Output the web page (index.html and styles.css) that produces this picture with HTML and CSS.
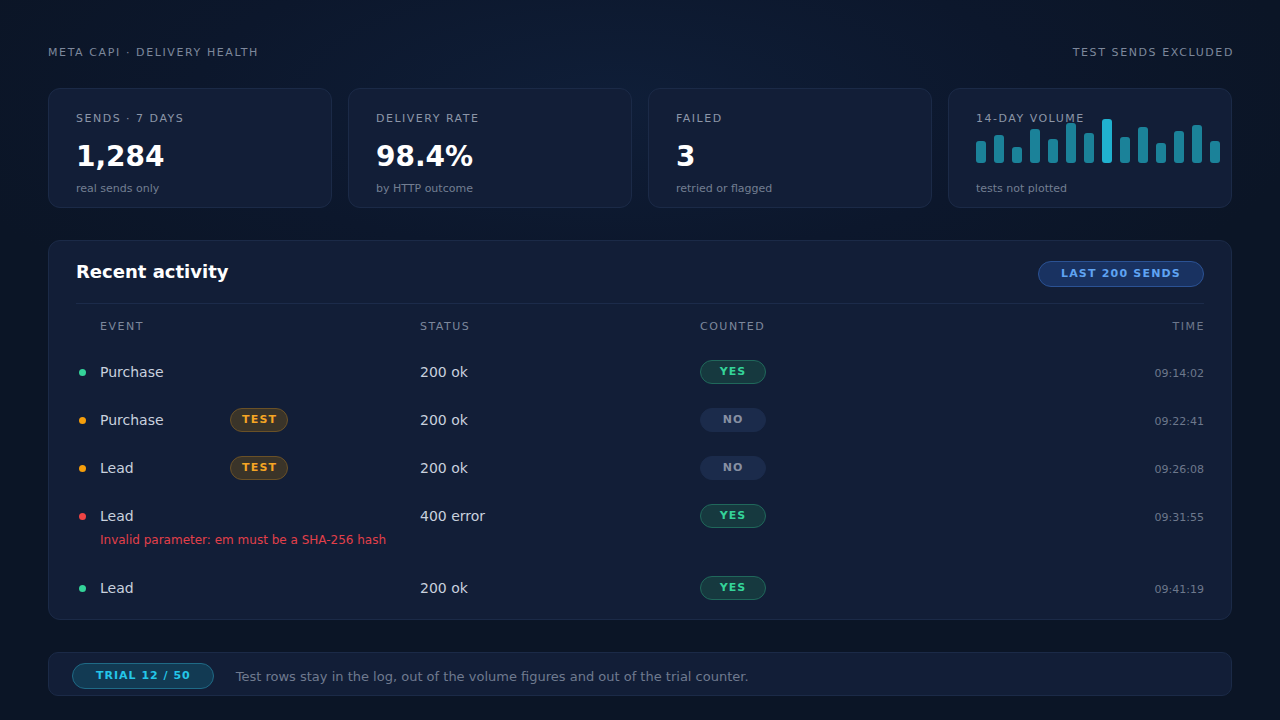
FILE: index.html
```html
<!DOCTYPE html>
<html lang="en">

<head>
    <meta charset="UTF-8" />
    <title>Delivery health</title>
    <link rel="stylesheet" href="styles.css">
</head>

<body>
    <div class="page">
        <div class="top">
            <span>META CAPI · DELIVERY HEALTH</span>
            <span>TEST SENDS EXCLUDED</span>
        </div>

        <!-- 统计卡片 -->
        <div class="stats">
            <div class="card">
                <div class="label">SENDS · 7 DAYS</div>
                <div class="value">1,284</div>
                <div class="sub">real sends only</div>
            </div>
            <div class="card">
                <div class="label">DELIVERY RATE</div>
                <div class="value">98.4%</div>
                <div class="sub">by HTTP outcome</div>
            </div>
            <div class="card">
                <div class="label">FAILED</div>
                <div class="value">3</div>
                <div class="sub">retried or flagged</div>
            </div>
            <div class="card">
                <div class="label">14-DAY VOLUME</div>
                <div class="chart">
                    <i style="height: 22px"></i>
                    <i style="height: 28px"></i>
                    <i style="height: 16px"></i>
                    <i style="height: 34px"></i>
                    <i style="height: 24px"></i>
                    <i style="height: 40px"></i>
                    <i style="height: 30px"></i>
                    <i class="peak" style="height: 44px"></i>
                    <i style="height: 26px"></i>
                    <i style="height: 36px"></i>
                    <i style="height: 20px"></i>
                    <i style="height: 32px"></i>
                    <i style="height: 38px"></i>
                    <i style="height: 22px"></i>
                </div>
                <div class="sub">tests not plotted</div>
            </div>
        </div>

        <!-- 最近记录 -->
        <div class="panel">
            <div class="panel-head">
                <h3>Recent activity</h3>
                <span class="pill blue">LAST 200 SENDS</span>
            </div>
            <div class="row head">
                <span></span>
                <span>EVENT</span>
                <span>STATUS</span>
                <span>COUNTED</span>
                <span class="time">TIME</span>
            </div>
            <div class="row">
                <span class="dot green"></span>
                <span class="event"><b>Purchase</b></span>
                <span>200 ok</span>
                <span><em class="count yes">YES</em></span>
                <span class="time">09:14:02</span>
            </div>
            <div class="row">
                <span class="dot orange"></span>
                <span class="event"><b>Purchase</b><em class="pill test">TEST</em></span>
                <span>200 ok</span>
                <span><em class="count no">NO</em></span>
                <span class="time">09:22:41</span>
            </div>
            <div class="row">
                <span class="dot orange"></span>
                <span class="event"><b>Lead</b><em class="pill test">TEST</em></span>
                <span>200 ok</span>
                <span><em class="count no">NO</em></span>
                <span class="time">09:26:08</span>
            </div>
            <div class="row">
                <span class="dot red"></span>
                <span class="event"><b>Lead</b></span>
                <span>400 error</span>
                <span><em class="count yes">YES</em></span>
                <span class="time">09:31:55</span>
                <p class="error">Invalid parameter: em must be a SHA-256 hash</p>
            </div>
            <div class="row">
                <span class="dot green"></span>
                <span class="event"><b>Lead</b></span>
                <span>200 ok</span>
                <span><em class="count yes">YES</em></span>
                <span class="time">09:41:19</span>
            </div>
        </div>

        <div class="foot">
            <span class="pill trial">TRIAL 12 / 50</span>
            <p>Test rows stay in the log, out of the volume figures and out of the trial counter.</p>
        </div>
    </div>
</body>

</html>
```

FILE: styles.css
```css
body {
    margin: 0;
    padding: 0;
    height: 720px;
    overflow: hidden;
    font-family: "DejaVu Sans", "Liberation Sans", sans-serif;
    color: #c9d1de;
    background: radial-gradient(ellipse 700px 260px at 48% 14%, #0f1e38 0%, #0c172c 60%, #0b1526 100%);
    background-color: #0b1526;
}

.page {
    padding: 46px 48px 0;
}

.top {
    display: flex;
    justify-content: space-between;
    font-size: 11px;
    line-height: 14px;
    letter-spacing: 1.6px;
    color: #7d889c;
    margin-bottom: 28px;
    margin-right: -2px;
}

.stats {
    display: grid;
    grid-template-columns: repeat(4, minmax(0, 1fr));
    gap: 16px;
    margin-bottom: 32px;
}

.card {
    height: 120px;
    box-sizing: border-box;
    padding: 23px 27px 0;
    background-color: #121e37;
    border: 1px solid #1b2a47;
    border-radius: 12px;
}

.label {
    font-size: 11px;
    line-height: 14px;
    letter-spacing: 1.5px;
    color: #8c96a8;
}

.value {
    margin-top: 14px;
    font-size: 28px;
    line-height: 34px;
    font-weight: bold;
    color: #fff;
}

.sub {
    margin-top: 8px;
    font-size: 11px;
    line-height: 14px;
    color: #737e92;
}

.chart {
    display: flex;
    align-items: flex-end;
    gap: 8px;
    height: 23px;
    margin-top: 14px;
    padding-bottom: 11px;
}

.chart i {
    flex: none;
    width: 10px;
    border-radius: 3px;
    background-color: #1b8299;
}

.chart i.peak {
    background-color: #20b1cf;
}

.panel {
    height: 380px;
    box-sizing: border-box;
    padding: 19px 27px 8px;
    background-color: #121e37;
    border: 1px solid #1b2a47;
    border-radius: 12px;
    margin-bottom: 32px;
}

.panel-head {
    display: flex;
    justify-content: space-between;
    align-items: center;
    padding: 1px 0 16px;
    border-bottom: 1px solid #1c2b4a;
}

.panel-head h3 {
    margin: 0 0 5px;
    font-size: 18px;
    color: #fff;
}

.pill {
    display: inline-block;
    font-style: normal;
    font-size: 11px;
    line-height: 14px;
    font-weight: bold;
    letter-spacing: 1.2px;
    border-radius: 20px;
}

.pill.blue {
    padding: 5px 22px;
    color: #5fa3f2;
    background-color: #193261;
    border: 1px solid #2b5294;
}

.pill.test {
    padding: 4px 10px 4px 11px;
    color: #f5a524;
    background-color: #3a3429;
    border: 1px solid #6a5127;
}

.pill.trial {
    padding: 5px 22px 5px 23px;
    letter-spacing: 1px;
    color: #24c6e8;
    background-color: #123a53;
    border: 1px solid #1f6a86;
}

.row {
    display: grid;
    grid-template-columns: 24px 320px 280px 1fr auto;
    align-items: center;
    padding: 12px 0;
    font-size: 14px;
    line-height: 24px;
    color: #c9d1de;
}

.row.head {
    padding: 2px 0 0;
    height: 42px;
    font-size: 11px;
    letter-spacing: 1.5px;
    color: #7d889c;
}

.row.head .time {
    padding-top: 0;
    line-height: 24px;
    margin-right: -1px;
}

.dot {
    width: 7px;
    height: 7px;
    margin-left: 3px;
    border-radius: 50%;
}

.dot.green {
    background-color: #34d399;
}

.dot.orange {
    background-color: #f59e0b;
}

.dot.red {
    background-color: #ef4444;
}

.event {
    display: flex;
    align-items: center;
}

.event b {
    width: 130px;
    font-weight: normal;
}

.count {
    display: block;
    width: 66px;
    box-sizing: border-box;
    text-align: center;
    font-style: normal;
    font-size: 11px;
    line-height: 22px;
    font-weight: bold;
    letter-spacing: 1px;
    border-radius: 12px;
}

.count.yes {
    color: #34d399;
    background-color: #16393f;
    border: 1px solid #20685b;
}

.count.no {
    color: #8790a3;
    background-color: #1b2b4b;
    border: 1px solid #1b2b4b;
}

.time {
    padding-top: 3px;
    line-height: 21px;
    text-align: right;
    font-size: 11px;
    color: #6d788c;
}

.error {
    grid-column: 2 / 6;
    margin: 0;
    font-size: 12px;
    line-height: 24px;
    color: #e3404a;
}

.foot {
    display: flex;
    align-items: center;
    gap: 22px;
    height: 44px;
    box-sizing: border-box;
    padding: 4px 23px 0;
    background-color: #121e37;
    border: 1px solid #1b2a47;
    border-radius: 10px;
}

.foot p {
    margin: 0;
    font-size: 13px;
    color: #6f7a8f;
}
```
